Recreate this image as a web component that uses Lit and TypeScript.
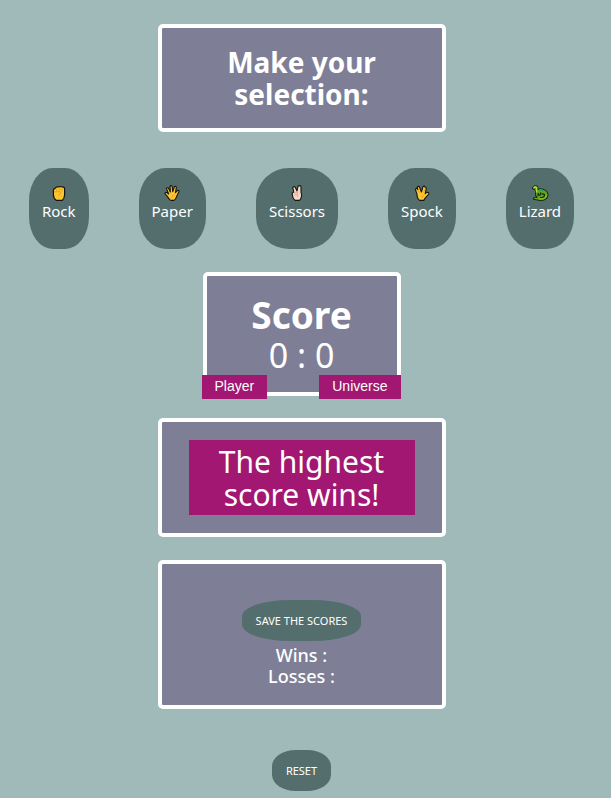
import { LitElement, html, css, svg } from "lit";
import { customElement, property, state } from "lit/decorators.js";

const icons = {
  rock: svg`
    <path d="M4 3.4 Q5.2 1.6 7 2 Q9 1.2 10.8 1.8 Q13.6 1.6 13.6 4.2 V9.8 Q13.4 13.4 11.4 15.3 H5.2 Q2.4 13.4 2.4 9.6 V5.2 Q2.6 3.8 4 3.4 Z" fill="#fdc530" stroke="#15150f" stroke-width="1.2"/>
    <path d="M5.4 3.6 V6.4 M8.2 3 V6.4 M11 3 V6.4 M3.2 6.8 H9.6 Q10.6 8.4 8.6 9 Q8 9.8 8 10.8" fill="none" stroke="#d4962a" stroke-width=".7"/>`,
  paper: svg`
    <path d="M5.6 14.6 Q3.6 11.4 1 8.6 Q.8 7.2 2.6 7.4 L4.7 9 L2.5 3.6 Q3 2.2 4.4 3 L6.4 7 L6 1.4 Q7 0 8.1 1.2 L8.8 6.7 L10.5 1.6 Q12 .8 12.4 2.4 L11.4 7.6 L13.8 5.4 Q15.4 5.2 15 6.8 Q13.6 9 12.6 11.6 Q11.6 14.4 9.8 15.4 H6.8 Z" fill="#fdc530" stroke="#15150f" stroke-width="1.1" stroke-linejoin="round"/>
    <path d="M7.6 13 Q7.8 10.4 11 9.6" fill="none" stroke="#d89a22" stroke-width=".7"/>`,
  scissors: svg`
    <path d="M3.2 9.4 Q2.8 7.6 4.8 7 L3.8 2.6 Q4.8 .8 6.2 2.2 L8 6 L9 1.4 Q10.6 0 12 1.4 L12 7.2 Q13.2 9.6 12.2 12.6 Q11.6 14.4 10.4 15.4 H6 Q3.6 13.4 3.2 9.4 Z" fill="#f8d8c6" stroke="#15150f" stroke-width="1.1" stroke-linejoin="round"/>
    <path d="M5 8.2 L8.4 7.4 Q9.6 8.8 7.8 9.6 L5 10 M8.4 9.6 Q8.2 11 9 11.8" fill="none" stroke="#c99a84" stroke-width=".7"/>`,
  spock: svg`
    <path d="M4.4 14.4 Q3 12 2.8 8.6 L1.4 4.4 Q2 2.8 3.2 3.8 L3.8 4.6 L3.2 2 Q4.4 .6 5.6 2.2 L7.4 7 L9 1.6 Q10.4 .4 11 2.2 Q12.4 2 12.2 4 L11.2 8.6 L13 7.4 Q15.2 7.2 14.8 9 L11.4 12.8 L9.8 15.4 H5.6 Z" fill="#fdc530" stroke="#15150f" stroke-width="1.1" stroke-linejoin="round"/>
    <path d="M4 4.6 L5.2 8 M10.8 3.6 L9.8 7.4 M7.8 13 Q8 10.8 10.4 10" fill="none" stroke="#d89a22" stroke-width=".7"/>`,
  lizard: svg`
    <path d="M.2 2.6 Q2.2 -.2 5.2 1 Q6.4 2.2 5.8 4.4 Q8.4 3.2 11 4.2 Q15.6 5.4 16.2 9.6 Q16 14 11.8 15.2 Q8 16 4.4 14.8 L1.2 14.2 Q1 12.4 3.4 12.2 L5 12.6 Q2.8 10.4 3.6 7.4 L3 4.4 L.6 4 Z" fill="#62a51f" stroke="#14240d" stroke-width="1" stroke-linejoin="round"/>
    <path d="M1.6 2.6 Q3.6 1.4 4.6 2.8 Q4.2 6 4.8 7.4" fill="none" stroke="#b4dc3a" stroke-width="1.5"/>
    <path d="M7 5.4 Q10 4.2 12.4 6.6" fill="none" stroke="#2fa866" stroke-width="1.6"/>
    <path d="M6 8 Q7 10 5.4 11 M8.2 12.6 Q12.6 12.8 12.6 9.8 Q11.4 8 9.6 9.4 M9 7.6 L7.6 11" fill="none" stroke="#14240d" stroke-width="1.2"/>
    <path d="M7.4 14 Q13.8 14.4 14.4 9.8" fill="none" stroke="#9ccc2a" stroke-width="1"/>`,
};

type Choice = keyof typeof icons;

@customElement("choice-button")
export class ChoiceButton extends LitElement {
  @property() choice: Choice = "rock";
  @property() label = "";

  static styles = css`
    .choice {
      display: flex;
      flex-direction: column;
      align-items: center;
      height: 81px;
      padding: 16px 13px;
      border: 0;
      border-radius: 40%;
      background: #546e6d;
      color: #fff;
      font: 15px/18px "Noto Sans", sans-serif;
      cursor: pointer;
    }
    .icon {
      width: 18px;
      height: 18px;
    }
  `;

  render() {
    return html`<button class="choice" type="button">
      <svg class="icon" viewBox="-1 -1 18 18" aria-hidden="true">${icons[this.choice]}</svg>
      <span>${this.label}</span>
    </button>`;
  }
}

@customElement("app-root")
export class AppRoot extends LitElement {
  @state() player = 0;
  @state() universe = 0;

  private choices: { id: Choice; label: string }[] = [
    { id: "rock", label: "Rock" },
    { id: "paper", label: "Paper" },
    { id: "scissors", label: "Scissors" },
    { id: "spock", label: "Spock" },
    { id: "lizard", label: "Lizard" },
  ];

  static styles = css`
    :host {
      display: flex;
      flex-direction: column;
      align-items: center;
      box-sizing: border-box;
      min-height: 100vh;
      padding: 24px 8px 7px 0;
      background: #a0baba;
      color: #fff;
      font-family: "Noto Sans", sans-serif;
      text-align: center;
    }
    h1, h2, p {
      margin: 0;
    }
    .card {
      box-sizing: border-box;
      width: 288px;
      max-width: 100%;
      border: 4px solid #fff;
      border-radius: 5px;
      background: #7e7f96;
    }
    .heading {
      padding: 18px 40px;
      font-size: 28px;
      line-height: 32px;
    }
    .choices {
      display: flex;
      justify-content: center;
      gap: 50px;
      margin: 36px 0 23px;
    }
    .score {
      position: relative;
      width: 198px;
      height: 124px;
      padding-top: 19px;
    }
    .score-title {
      font-size: 37px;
      line-height: 40px;
    }
    .score-value {
      font-size: 34px;
      line-height: 40px;
      white-space: pre;
    }
    .badge {
      position: absolute;
      bottom: -7px;
      padding: 0 13px 2px;
      background: #a11772;
      font: 14px/22px "Liberation Sans", sans-serif;
    }
    .player {
      left: -5px;
    }
    .universe {
      right: -4px;
    }
    .result {
      margin: 22px 0 23px;
      padding: 18px 27px;
    }
    .message {
      padding: 5px 20px 4px;
      background: #a11772;
      font-size: 30px;
      line-height: 33px;
    }
    .record {
      display: flex;
      flex-direction: column;
      align-items: center;
      padding: 36px 20px 18px;
      font-size: 18px;
      font-weight: 500;
      line-height: 21px;
    }
    .action {
      height: 41px;
      padding: 0 14px;
      border: 0;
      border-radius: 40%;
      background: #546e6d;
      color: #fff;
      font: 11px/20px "Noto Sans", sans-serif;
      cursor: pointer;
    }
    .save {
      margin-bottom: 4px;
    }
    .reset {
      margin-top: 41px;
    }
  `;

  render() {
    return html`
      <h1 class="card heading">Make your selection:</h1>
      <div class="choices">
        ${this.choices.map(
          (c) => html`<choice-button .choice=${c.id} .label=${c.label}></choice-button>`,
        )}
      </div>
      <section class="card score">
        <h2 class="score-title">Score</h2>
        <p class="score-value">${`${this.player} : ${this.universe}`}</p>
        <span class="badge player">Player</span>
        <span class="badge universe">Universe</span>
      </section>
      <section class="card result">
        <p class="message">The highest score wins!</p>
      </section>
      <section class="card record">
        <button class="action save" type="button">SAVE THE SCORES</button>
        <p>Wins :</p>
        <p>Losses :</p>
      </section>
      <button class="action reset" type="button">RESET</button>
    `;
  }
}
